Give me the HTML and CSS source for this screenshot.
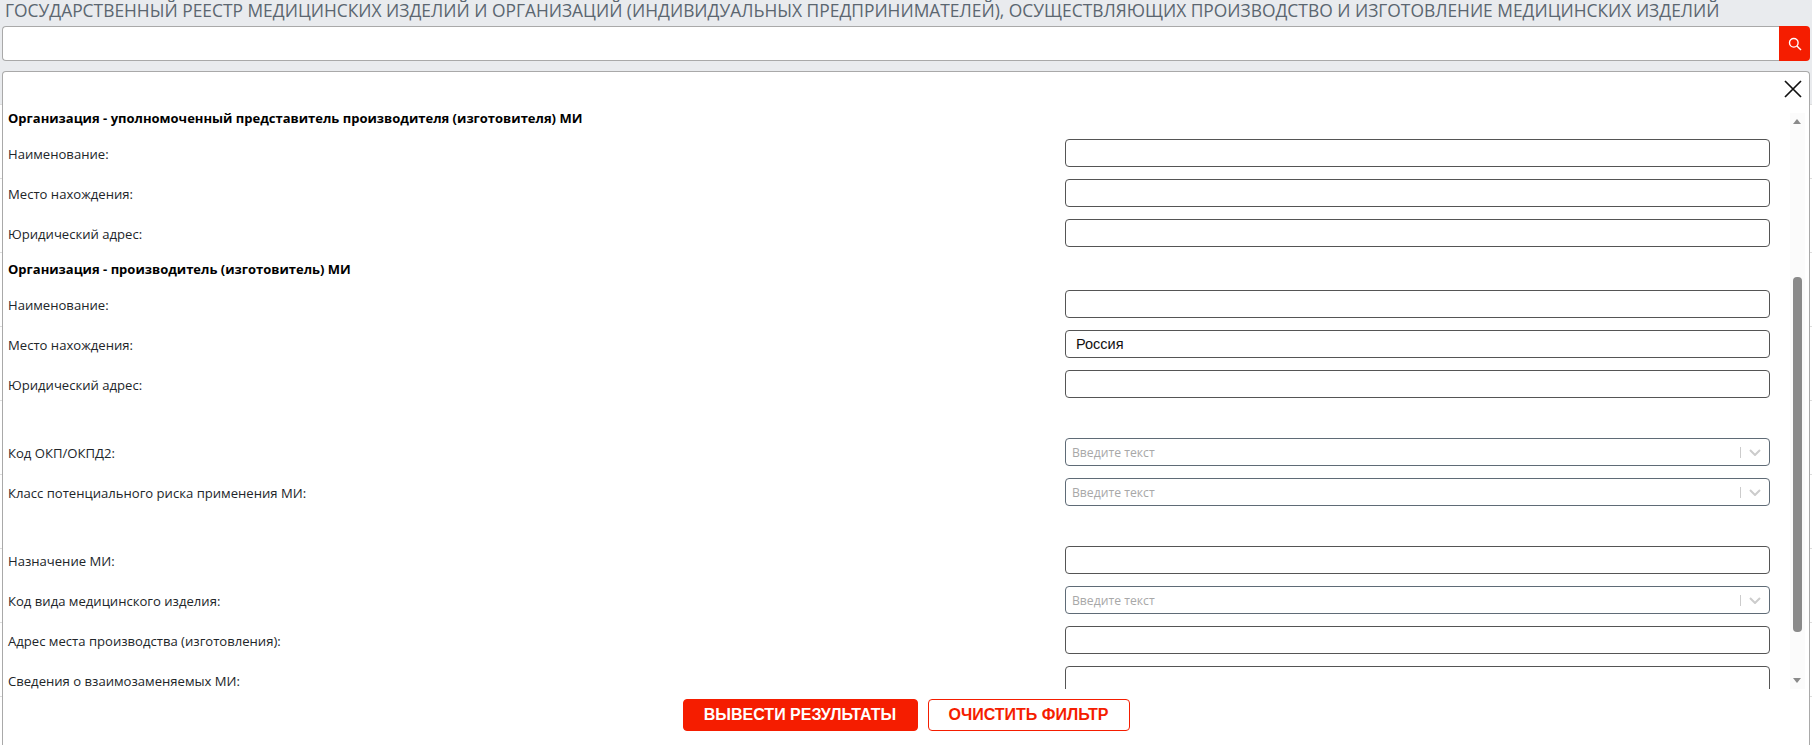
FILE: index.html
```html
<!DOCTYPE html>
<html lang="ru">
<head>
    <meta charset="UTF-8">
    <title>Государственный реестр медицинских изделий</title>
    <link rel="stylesheet" href="styles.css">
</head>
<body>
    <h1 class="page-title">ГОСУДАРСТВЕННЫЙ РЕЕСТР МЕДИЦИНСКИХ ИЗДЕЛИЙ И ОРГАНИЗАЦИЙ (ИНДИВИДУАЛЬНЫХ ПРЕДПРИНИМАТЕЛЕЙ), ОСУЩЕСТВЛЯЮЩИХ ПРОИЗВОДСТВО И ИЗГОТОВЛЕНИЕ МЕДИЦИНСКИХ ИЗДЕЛИЙ</h1>
    <div class="search">
        <input type="text" class="search-input">
        <button class="search-btn">
            <svg width="14" height="14" viewBox="0 0 14 14" fill="none" stroke="#fff" stroke-width="1.4">
                <circle cx="5.8" cy="5.8" r="4.3"/>
                <path d="M8.9 8.9L13 13"/>
            </svg>
        </button>
    </div>
    <div class="filter">
        <div class="filter-head">
            <svg class="close-icon" width="18" height="18" viewBox="0 0 18 18" stroke="#111" stroke-width="1.7">
                <path d="M1 1L17 17M17 1L1 17"/>
            </svg>
        </div>
        <div class="filter-scroll">
            <div class="filter-body">
                <div class="section-title">Организация - уполномоченный представитель производителя (изготовителя) МИ</div>
                <div class="row"><label class="row-label">Наименование:</label><input class="field" type="text"></div>
                <div class="row"><label class="row-label">Место нахождения:</label><input class="field" type="text"></div>
                <div class="row"><label class="row-label">Юридический адрес:</label><input class="field" type="text"></div>
                <div class="section-title">Организация - производитель (изготовитель) МИ</div>
                <div class="row"><label class="row-label">Наименование:</label><input class="field" type="text"></div>
                <div class="row"><label class="row-label">Место нахождения:</label><input class="field" type="text" value="Россия"></div>
                <div class="row"><label class="row-label">Юридический адрес:</label><input class="field" type="text"></div>
                <div class="spacer"></div>
                <div class="row">
                    <label class="row-label">Код ОКП/ОКПД2:</label>
                    <div class="select"><span class="select-text">Введите текст</span><span class="select-sep"></span>
                        <svg class="select-arrow" width="12" height="7" viewBox="0 0 12 7" fill="none" stroke="#ccc" stroke-width="2"><path d="M1 1l5 5 5-5"/></svg>
                    </div>
                </div>
                <div class="row">
                    <label class="row-label">Класс потенциального риска применения МИ:</label>
                    <div class="select"><span class="select-text">Введите текст</span><span class="select-sep"></span>
                        <svg class="select-arrow" width="12" height="7" viewBox="0 0 12 7" fill="none" stroke="#ccc" stroke-width="2"><path d="M1 1l5 5 5-5"/></svg>
                    </div>
                </div>
                <div class="spacer"></div>
                <div class="row"><label class="row-label">Назначение МИ:</label><input class="field" type="text"></div>
                <div class="row">
                    <label class="row-label">Код вида медицинского изделия:</label>
                    <div class="select"><span class="select-text">Введите текст</span><span class="select-sep"></span>
                        <svg class="select-arrow" width="12" height="7" viewBox="0 0 12 7" fill="none" stroke="#ccc" stroke-width="2"><path d="M1 1l5 5 5-5"/></svg>
                    </div>
                </div>
                <div class="row"><label class="row-label">Адрес места производства (изготовления):</label><input class="field" type="text"></div>
                <div class="row"><label class="row-label">Сведения о взаимозаменяемых МИ:</label><input class="field" type="text"></div>
            </div>
            <div class="scrollbar">
                <span class="scroll-up"></span>
                <span class="scroll-thumb"></span>
                <span class="scroll-down"></span>
            </div>
        </div>
        <div class="filter-foot">
            <button class="btn btn-primary">ВЫВЕСТИ РЕЗУЛЬТАТЫ</button>
            <button class="btn btn-outline">ОЧИСТИТЬ ФИЛЬТР</button>
        </div>
    </div>
</body>
</html>
```

FILE: styles.css
```css
html, body {
    height: 100%;
}
body {
    margin: 0;
    padding: 0 2px;
    box-sizing: border-box;
    height: 745px;
    overflow: hidden;
    display: flex;
    flex-direction: column;
    /* table rows of the page behind the filter, only the edges show */
    background:
        linear-gradient(#e9ebee 0 104px, transparent 104px) no-repeat,
        linear-gradient(#fff 73px, #ddd 73px) 0 31px / 100% 74px;
    font-family: "Open Sans", sans-serif;
    color: #111;
}
.page-title {
    margin: 0;
    height: 26px;
    padding-left: 3px;
    font-size: 17.4px;
    font-weight: 400;
    line-height: 20px;
    color: #5b6670;
    white-space: nowrap;
}
.search {
    display: flex;
    height: 35px;
    margin-bottom: 10px;
}
.search-input {
    flex: 1;
    min-width: 0;
    box-sizing: border-box;
    border: 1px solid #a9a9a9;
    border-right: none;
    border-radius: 4px 0 0 4px;
    background: #fff;
    outline: none;
}
.search-btn {
    width: 31px;
    padding: 0;
    border: none;
    border-radius: 0 4px 4px 0;
    background-color: #f51d00;
    display: flex;
    align-items: center;
    justify-content: center;
}
.filter {
    flex: 1;
    min-height: 0;
    display: flex;
    flex-direction: column;
    background: #fff;
    border: 1px solid #a9a9a9;
    border-bottom: none;
    border-radius: 4px 4px 0 0;
}
.filter-head {
    height: 37px;
    flex: none;
    display: flex;
    justify-content: flex-end;
    align-items: flex-start;
    padding: 8px 7px 0 0;
    box-sizing: border-box;
}
.filter-scroll {
    position: relative;
    height: 580px;
    flex: none;
    overflow: hidden;
}
.filter-body {
    padding: 0 39px 0 5px;
}
.section-title {
    font-size: 13px;
    font-weight: 700;
    line-height: 20px;
    margin-bottom: 11px;
    color: #000;
}
.section-title:first-child {
    margin-top: -1px;
}
.row {
    display: flex;
    align-items: center;
    height: 28px;
    margin-bottom: 12px;
}
.row-label {
    width: 1057px;
    flex: none;
    padding-top: 1px;
    font-size: 13.1px;
    color: #212529;
}
.spacer {
    height: 28px;
}
.field {
    flex: 1;
    min-width: 0;
    height: 28px;
    box-sizing: border-box;
    padding: 0 10px;
    border: 1px solid #555;
    border-radius: 4px;
    background: #fff;
    font-family: "Liberation Sans", sans-serif;
    font-size: 14.5px;
    color: #111;
    outline: none;
}
.select {
    flex: 1;
    min-width: 0;
    height: 28px;
    box-sizing: border-box;
    padding: 0 8px 0 6px;
    display: flex;
    align-items: center;
    border: 1px solid #5f6b76;
    border-radius: 4px;
    background: #fff;
}
.select-text {
    flex: 1;
    font-size: 12.2px;
    color: #a8a8a8;
}
.select-sep {
    width: 1px;
    height: 11px;
    margin-right: 8px;
    background-color: #ccc;
}
.scrollbar {
    position: absolute;
    top: 4px;
    bottom: 0;
    right: 4px;
    width: 15px;
    background-color: #fbfbfb;
}
.scroll-up, .scroll-down {
    position: absolute;
    left: 3px;
    width: 0;
    height: 0;
    border-left: 4.5px solid transparent;
    border-right: 4.5px solid transparent;
}
.scroll-up {
    top: 6px;
    border-bottom: 5px solid #8a8a8a;
}
.scroll-down {
    bottom: 6px;
    border-top: 5px solid #8a8a8a;
}
.scroll-thumb {
    position: absolute;
    left: 3px;
    top: 164px;
    width: 9px;
    height: 355px;
    border-radius: 4px;
    background-color: #8a8a8a;
}
.filter-foot {
    flex: 1;
    display: flex;
    justify-content: center;
    gap: 10px;
    padding-top: 10px;
}
.btn {
    height: 32px;
    padding: 0;
    box-sizing: border-box;
    border-radius: 4px;
    font-family: "Liberation Sans", sans-serif;
    font-size: 16px;
    font-weight: 700;
}
.btn-primary {
    width: 235px;
    background-color: #f51d00;
    border: 1px solid #f51d00;
    color: #fff;
}
.btn-outline {
    width: 202px;
    background: #fff;
    border: 1px solid #f51d00;
    color: #f51d00;
}
```
